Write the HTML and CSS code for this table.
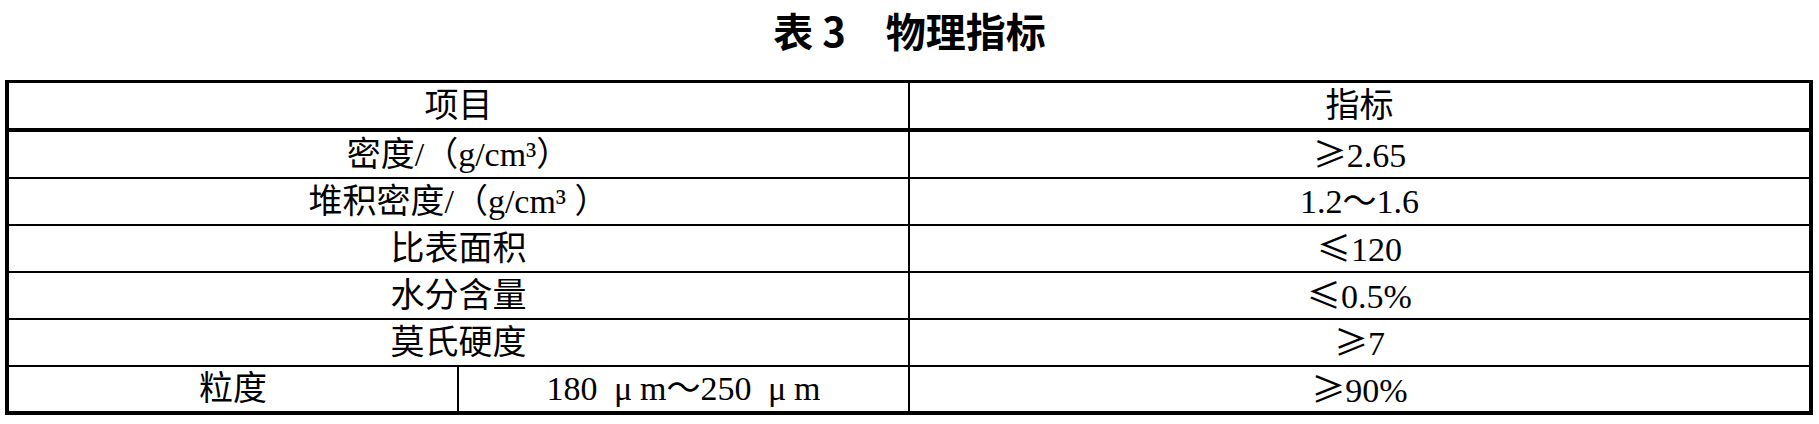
FILE: index.html
```html
<!DOCTYPE html>
<html lang="zh-CN">
<head>
<meta charset="utf-8">
<title>表 3 物理指标</title>
<link rel="stylesheet" href="styles.css">
</head>
<body>
<div class="title">表 3　物理指标</div>
<table class="spec">
  <colgroup>
    <col class="c1">
    <col class="c2">
    <col class="c3">
  </colgroup>
  <thead>
    <tr><th colspan="2">项目</th><th class="last">指标</th></tr>
  </thead>
  <tbody>
    <tr><td colspan="2">密度/（g/cm³）</td><td class="last"><span class="sym">≥</span>2.65</td></tr>
    <tr><td colspan="2">堆积密度/（g/cm³ ）</td><td class="last">1.2～1.6</td></tr>
    <tr><td colspan="2">比表面积</td><td class="last"><span class="sym">≤</span>120</td></tr>
    <tr><td colspan="2">水分含量</td><td class="last"><span class="sym">≤</span>0.5%</td></tr>
    <tr><td colspan="2">莫氏硬度</td><td class="last"><span class="sym">≥</span>7</td></tr>
    <tr class="end"><td>粒度</td><td>180 <span class="mu">μ</span>m～250 <span class="mu">μ</span>m</td><td class="last"><span class="sym">≥</span>90%</td></tr>
  </tbody>
</table>
</body>
</html>
```
FILE: styles.css
```css
html, body {
  margin: 0;
  padding: 0;
  background: #fff;
  color: #000;
}

.title {
  height: 60px;
  margin-bottom: 20px;
  line-height: 60px;
  text-align: center;
  font-family: "Noto Sans CJK SC", sans-serif;
  font-weight: 700;
  font-size: 40px;
}

.spec {
  margin-left: 5px;
  width: 1808px;
  table-layout: fixed;
  border-collapse: separate;
  border-spacing: 0;
  border-style: solid;
  border-color: #000;
  border-width: 3px 4px 4px 4px;
  font-family: "Liberation Serif", "Noto Sans CJK SC", serif;
  font-size: 34px;
}

.c1 { width: 450px; }
.c2 { width: 451px; }

.spec th,
.spec td {
  box-sizing: border-box;
  padding: 0;
  height: 47px;
  line-height: 30px;
  vertical-align: middle;
  text-align: center;
  font-weight: 400;
  white-space: nowrap;
  border-right: 2px solid #000;
  border-bottom: 2px solid #000;
}

.spec th {
  height: 49px;
  border-bottom-width: 4px;
}

.spec .last {
  border-right: none;
}

.spec tr.end td {
  border-bottom: none;
  height: 44px;
}

.sym {
  font-family: "Noto Sans CJK SC", sans-serif;
}

.mu {
  display: inline-block;
  width: 1em;
  text-align: center;
}
```
